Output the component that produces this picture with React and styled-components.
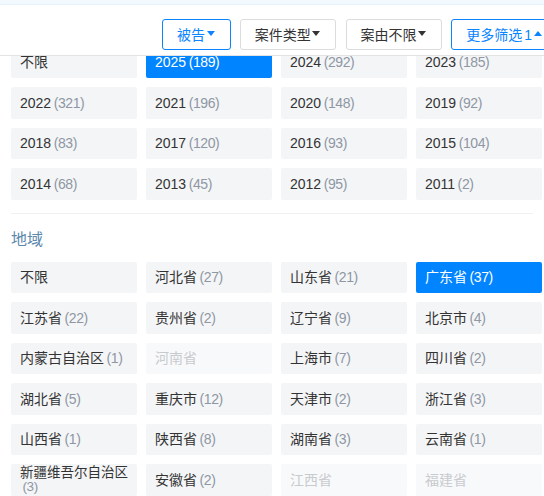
import styled, { createGlobalStyle } from 'styled-components';

const years = [
  ['不限'], ['2025', 189, 'on'], ['2024', 292], ['2023', 185],
  ['2022', 321], ['2021', 196], ['2020', 148], ['2019', 92],
  ['2018', 83], ['2017', 120], ['2016', 93], ['2015', 104],
  ['2014', 68], ['2013', 45], ['2012', 95], ['2011', 2],
];

const regions = [
  ['不限'], ['河北省', 27], ['山东省', 21], ['广东省', 37, 'on'],
  ['江苏省', 22], ['贵州省', 2], ['辽宁省', 9], ['北京市', 4],
  ['内蒙古自治区', 1], ['河南省', null, 'off'], ['上海市', 7], ['四川省', 2],
  ['湖北省', 5], ['重庆市', 12], ['天津市', 2], ['浙江省', 3],
  ['山西省', 1], ['陕西省', 8], ['湖南省', 3], ['云南省', 1],
  ['新疆维吾尔自治区', 3], ['安徽省', 2], ['江西省', null, 'off'], ['福建省', null, 'off'],
];

const Options = ({ items }) => (
  <Grid>
    {items.map(([name, count, state]) => (
      <Chip key={name} $state={state} $long={name.length > 6}>
        {name}
        {count != null && <Count $state={state}>({count})</Count>}
      </Chip>
    ))}
  </Grid>
);

export default function App() {
  return (
    <Page>
      <GlobalStyle />
      <Header>
        <FilterButton $active>被告<Caret /></FilterButton>
        <FilterButton>案件类型<Caret /></FilterButton>
        <FilterButton>案由不限<Caret /></FilterButton>
        <FilterButton $active>更多筛选 1<Caret $up /></FilterButton>
      </Header>
      <Content>
        <Options items={years} />
        <Divider />
        <Title>地域</Title>
        <Options items={regions} />
      </Content>
    </Page>
  );
}

const GlobalStyle = createGlobalStyle`
  html, body {
    margin: 0;
    background: #fff;
    overflow: hidden;
  }
`;

const Page = styled.div`
  position: relative;
  width: 544px;
  height: 496px;
  overflow: hidden;
  font-family: "Liberation Sans", "Noto Sans CJK SC", sans-serif;
  font-size: 14px;
  color: #333;
`;

const Header = styled.div`
  position: absolute;
  top: 0;
  left: 0;
  z-index: 2;
  box-sizing: border-box;
  width: 544px;
  height: 56px;
  display: flex;
  align-items: flex-start;
  gap: 9.25px;
  padding: 15px 0 0 162px;
  overflow: hidden;
  background: #fff;
  border-top: 4px solid #f2f9ff;
  border-bottom: 1px solid #e3e3e3;
  box-shadow: inset 0 1px 0 #e6f2fc;
`;

const FilterButton = styled.div`
  flex: none;
  box-sizing: border-box;
  height: 30.5px;
  display: flex;
  align-items: center;
  padding: 0 15px 1px 14px;
  word-spacing: -2px;
  border: 1px solid ${(p) => (p.$active ? '#0a84ff' : '#dcdcdc')};
  border-radius: 3px;
  background: #fff;
  color: ${(p) => (p.$active ? '#0a84ff' : '#333')};
`;

const Caret = styled.span`
  margin-left: ${(p) => (p.$up ? '2px' : '1.5px')};
  width: 0;
  height: 0;
  border-left: 4px solid transparent;
  border-right: 4px solid transparent;
  ${(p) => (p.$up ? 'border-bottom' : 'border-top')}: 5px solid currentColor;
`;

const Content = styled.div`
  padding: 46.5px 2px 0 11px;
`;

const Grid = styled.div`
  display: grid;
  grid-template-columns: repeat(4, 126px);
  grid-auto-rows: 31.5px;
  gap: 9px;
`;

const Chip = styled.div`
  box-sizing: border-box;
  display: flex;
  flex-wrap: wrap;
  align-items: center;
  align-content: center;
  padding: 0 4px 0 9px;
  font-size: ${(p) => (p.$long ? '13.5px' : '14px')};
  line-height: 14px;
  border-radius: 2px;
  background: ${(p) => (p.$state === 'on' ? '#0084ff' : p.$state === 'off' ? '#f8f9fb' : '#f4f5f7')};
  color: ${(p) => (p.$state === 'on' ? '#fff' : p.$state === 'off' ? '#c8cacd' : '#333')};
`;

const Count = styled.span`
  margin-left: 2.5px;
  letter-spacing: -0.4px;
  color: ${(p) => (p.$state === 'on' ? '#fff' : '#8e97a3')};
`;

const Divider = styled.div`
  width: 522px;
  height: 1px;
  margin-top: 13.5px;
  background: #f0f1f3;
`;

const Title = styled.div`
  margin: 17px 0 12.5px;
  line-height: 18px;
  font-size: 16px;
  color: #5d89ad;
`;
